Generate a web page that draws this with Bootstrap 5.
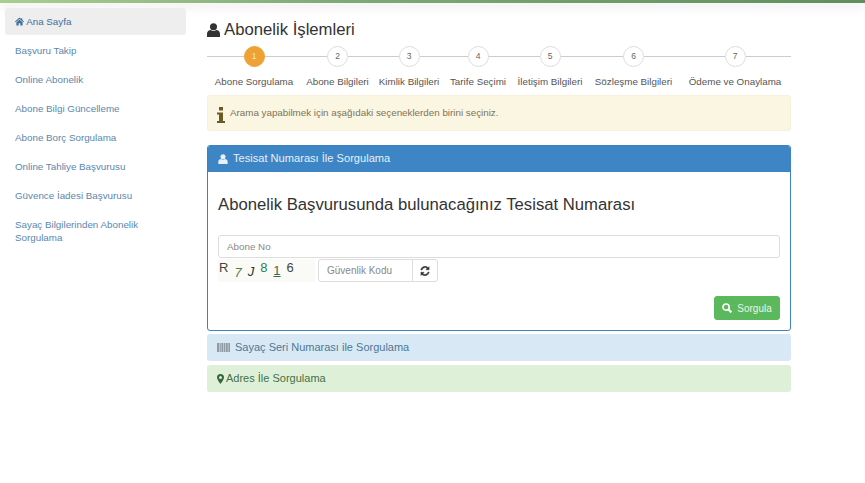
<!DOCTYPE html>
<html lang="tr">
<head>
  <meta charset="UTF-8">
  <meta name="viewport" content="width=device-width, initial-scale=1">
  <title>Abonelik İşlemleri</title>
  <link href="https://cdn.jsdelivr.net/npm/bootstrap@5.3.2/dist/css/bootstrap.min.css" rel="stylesheet">
  <style>
      body { font-family: "Liberation Sans", Arial, sans-serif; font-size: 9.8px; color: #555; background: #fff; overflow: hidden; }
      .top-strip { height: 2.500px; background: linear-gradient(90deg, #a9cf8f, #7fa877 40%, #5f8f5f); box-shadow: 0 4px 10px rgba(0,0,0,.14); }
      .page-wrap { display: flex; padding: 5.500px 74px 0 5px; }

      .side-col { width: 181px; flex: none; margin-right: 21px; }
      .side-col .nav-link { font-size: 9.8px; line-height: 13px; color: #5b87ad; padding: 7px 10px; border-radius: 3px; margin-bottom: 2px; }
      .side-col .nav-link.active { background: #eee; color: #3f6f9c; }
      .side-col svg { width: 9px; height: 9px; fill: #3f6f9c; vertical-align: -1px; }

      .main-col { width: 584px; flex: none; }
      .page-title { font-size: 16.700px; line-height: 20px; font-weight: 400; color: #333; margin: 12px 0 6px; display: flex; align-items: center; gap: 4px; }
      .page-title svg { width: 13px; height: 14px; fill: #333; }

      .step-row { display: flex; position: relative; margin-bottom: 7px; }
      .step-row::before { content: ""; position: absolute; left: 0; right: 0; top: 10px; height: 1px; background: #ccc; }
      .step-item { text-align: center; position: relative; font-size: 9.800px; color: #555; }
      .step-item:nth-child(1) { flex: 0 0 94px; }
      .step-item:nth-child(2) { flex: 0 0 73px; }
      .step-item:nth-child(3) { flex: 0 0 70px; }
      .step-item:nth-child(4) { flex: 0 0 68px; }
      .step-item:nth-child(5) { flex: 0 0 76px; }
      .step-item:nth-child(6) { flex: 0 0 91px; }
      .step-item:nth-child(7) { flex: 0 0 112px; }
      .step-dot { width: 21px; height: 21px; border-radius: 50%; border: 1px solid #ddd; background: #fff; margin: 0 auto 8px; font-size: 8.5px; line-height: 19px; color: #666; }
      .step-dot.on { background: #eea236; border-color: #eea236; color: #f8e3c0; }
      .step-name { line-height: 13px; display: block; white-space: nowrap; }

      .note-box { height: 36px; background: #fbf6e1; border: 1px solid #f8f0d8; border-radius: 3px; padding: 0 9px; margin-bottom: 14px; display: flex; align-items: center; gap: 5px; color: #7d7458; font-size: 9.8px; }
      .note-box svg { width: 8px; height: 16px; fill: #6b5a24; margin-top: 3px; }

      .main-panel { border-color: #3e82bf; border-radius: 3px; margin-bottom: 3px; height: 186px; }
      .main-panel .card-header { height: 26px; padding: 0 10px 1px; background: #3e85c6; border: 0; border-radius: 2px 2px 0 0; color: #e6f0f8; font-size: 11.100px; display: flex; align-items: center; gap: 5px; }
      .main-panel .card-header svg { width: 10px; height: 10px; fill: #e6f0f8; }
      .main-panel .card-body { padding: 23px 10px 10px; }
      .panel-heading-text { font-size: 16.700px; line-height: 20px; font-weight: 400; color: #333; margin: 0 0 20px; }
      .field-no { height: 23px; font-size: 9.800px; padding: 0 8px; border-radius: 3px; border-color: #ddd; color: #777; }
      .field-no::placeholder, .code-group .form-control::placeholder { color: #888; }
      .code-row { display: flex; align-items: flex-start; gap: 3px; margin-top: 1px; }
      .captcha-box { width: 97px; height: 23px; background: #fafbf6; font-size: 13px; line-height: 17px; display: flex; gap: 6px; padding-left: 1px; }
      .captcha-box span:nth-child(1) { color: #444; }
      .captcha-box span:nth-child(2) { color: #5b7a3a; padding-top: 5px; font-style: italic; }
      .captcha-box span:nth-child(3) { color: #333; padding-top: 4px; font-style: italic; }
      .captcha-box span:nth-child(4) { color: #2d7d5a; }
      .captcha-box span:nth-child(5) { color: #3b6b4b; padding-top: 3px; text-decoration: underline; }
      .captcha-box span:nth-child(6) { color: #444; }
      .code-group { width: 120px; }
      .code-group .form-control { height: 23px; min-height: 0; font-size: 10px; padding: 0 8px; border-color: #ddd; border-radius: 3px 0 0 3px; }
      .code-group .btn { height: 23px; width: 26px; padding: 0; border-color: #ddd; border-radius: 0 3px 3px 0; display: flex; align-items: center; justify-content: center; }
      .code-group svg { width: 10px; height: 10px; fill: #333; stroke: #333; stroke-width: .8; }
      .submit-line { display: flex; justify-content: flex-end; margin-top: 14px; }
      .go-btn { height: 24px; width: 66px; padding: 0; font-size: 10px; background: #5cb85c; border-color: #5cb85c; border-radius: 3px; color: #e8f5e8; display: flex; align-items: center; justify-content: center; gap: 5px; }
      .go-btn svg { width: 10px; height: 10px; fill: none; stroke: #fff; stroke-width: 2.600; }

      .fold-bar { height: 27px; border-radius: 3px; border: 0; padding: 0 10px; display: flex; align-items: center; font-size: 11px; margin-bottom: 4px; }
      .fold-blue { background: #d8e9f5; color: #4f7896; gap: 5px; }
      .fold-blue svg { width: 13px; height: 9px; fill: #8f9aa3; }
      .fold-green { background: #dff0d8; color: #44704a; gap: 2px; }
      .fold-green svg { width: 7px; height: 10px; fill: #33663a; }
  </style>
</head>
<body>
<div class="top-strip"></div>

<div class="page-wrap">
  <div class="side-col">
    <ul class="nav nav-pills flex-column">
      <li class="nav-item"><a class="nav-link active" href="#"><svg viewBox="0 0 16 16"><path d="M8 1 0 8l1 1.200L8 3.500l7 5.700L16 8l-3-2.600V2h-2v1.700zM2.500 9.500V15h4v-4h3v4h4V9.500L8 5z"/></svg> Ana Sayfa</a></li>
      <li class="nav-item"><a class="nav-link" href="#">Başvuru Takip</a></li>
      <li class="nav-item"><a class="nav-link" href="#">Online Abonelik</a></li>
      <li class="nav-item"><a class="nav-link" href="#">Abone Bilgi Güncelleme</a></li>
      <li class="nav-item"><a class="nav-link" href="#">Abone Borç Sorgulama</a></li>
      <li class="nav-item"><a class="nav-link" href="#">Online Tahliye Başvurusu</a></li>
      <li class="nav-item"><a class="nav-link" href="#">Güvence İadesi Başvurusu</a></li>
      <li class="nav-item"><a class="nav-link" href="#">Sayaç Bilgilerinden Abonelik Sorgulama</a></li>
    </ul>
  </div>

  <div class="main-col">
    <h1 class="page-title"><svg viewBox="0 0 14 15"><circle cx="7" cy="4" r="3.800"/><path d="M0 15v-3.500C0 9 2 7.500 4 7.500c1 .8 2 1.200 3 1.200s2-.4 3-1.200c2 0 4 1.500 4 4V15z"/></svg>Abonelik İşlemleri</h1>

    <div class="step-row">
      <div class="step-item"><div class="step-dot on">1</div><span class="step-name">Abone Sorgulama</span></div>
      <div class="step-item"><div class="step-dot">2</div><span class="step-name">Abone Bilgileri</span></div>
      <div class="step-item"><div class="step-dot">3</div><span class="step-name">Kimlik Bilgileri</span></div>
      <div class="step-item"><div class="step-dot">4</div><span class="step-name">Tarife Seçimi</span></div>
      <div class="step-item"><div class="step-dot">5</div><span class="step-name">İletişim Bilgileri</span></div>
      <div class="step-item"><div class="step-dot">6</div><span class="step-name">Sözleşme Bilgileri</span></div>
      <div class="step-item"><div class="step-dot">7</div><span class="step-name">Ödeme ve Onaylama</span></div>
    </div>

    <div class="note-box" role="alert">
      <svg viewBox="0 0 8 16"><rect x="2" y="0" width="4" height="3.500"/><path d="M0 5.500h6V14h2v2H0v-2h2V7.500H0z"/></svg>
      Arama yapabilmek için aşağıdaki seçeneklerden birini seçiniz.
    </div>

    <div class="card main-panel">
      <div class="card-header"><svg viewBox="0 0 14 15"><circle cx="7" cy="4" r="3.800"/><path d="M0 15v-3.500C0 9 2 7.500 4 7.500c1 .8 2 1.200 3 1.200s2-.4 3-1.200c2 0 4 1.500 4 4V15z"/></svg>Tesisat Numarası İle Sorgulama</div>
      <div class="card-body">
        <h2 class="panel-heading-text">Abonelik Başvurusunda bulunacağınız Tesisat Numarası</h2>
        <input type="text" class="form-control field-no" placeholder="Abone No">
        <div class="code-row">
          <div class="captcha-box"><span>R</span><span>7</span><span>J</span><span>8</span><span>1</span><span>6</span></div>
          <div class="input-group code-group">
            <input type="text" class="form-control" placeholder="Güvenlik Kodu">
            <button class="btn btn-light bg-white" type="button"><svg viewBox="0 0 16 16"><path d="M14.500 1v5h-5l1.900-1.900A4.700 4.700 0 0 0 3.400 6.200H1.200a6.900 6.900 0 0 1 11.700-3.600zM1.500 15v-5h5l-1.900 1.900a4.700 4.700 0 0 0 8-2.100h2.200a6.900 6.900 0 0 1-11.700 3.600z"/></svg></button>
          </div>
        </div>
        <div class="submit-line">
          <button class="btn go-btn" type="button"><svg viewBox="0 0 16 16"><circle cx="6.500" cy="6.500" r="5"/><path d="m10 10 5 5" stroke-width="3.500"/></svg>Sorgula</button>
        </div>
      </div>
    </div>

    <div class="fold-bar fold-blue"><svg viewBox="0 0 13 9"><path d="M0 0h2v9H0zM2.600 0h1.200v9H2.600zM4.400 0h2v9h-2zM7 0h1.200v9H7zM8.800 0h2v9h-2zM11.400 0H13v9h-1.600z"/></svg>Sayaç Seri Numarası ile Sorgulama</div>
    <div class="fold-bar fold-green"><svg viewBox="0 0 7 10"><path fill-rule="evenodd" d="M3.500 0A3.500 3.500 0 0 0 0 3.500C0 5.500 3.500 10 3.500 10S7 5.500 7 3.500A3.500 3.500 0 0 0 3.500 0zm0 2a1.500 1.500 0 1 1 0 3 1.500 1.500 0 0 1 0-3z"/></svg>Adres İle Sorgulama</div>
  </div>
</div>

<script src="https://cdn.jsdelivr.net/npm/bootstrap@5.3.2/dist/js/bootstrap.bundle.min.js"></script>
</body>
</html>
